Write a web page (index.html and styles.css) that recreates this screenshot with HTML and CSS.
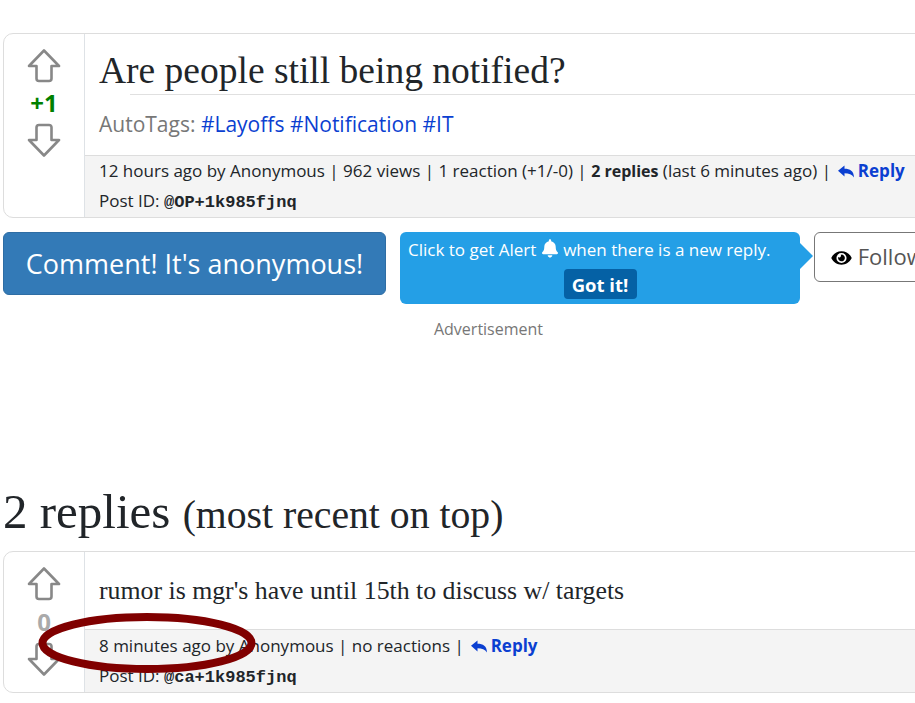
FILE: index.html
```html
<!DOCTYPE html>
<html lang="en">
<head>
    <meta charset="UTF-8">
    <meta name="viewport" content="width=device-width, initial-scale=1.0">
    <title>Are people still being notified?</title>
    <link rel="stylesheet" href="styles.css">
</head>
<body>
    <svg class="icon-defs" width="0" height="0">
        <symbol id="arrow-up" viewBox="0 0 34 34">
            <path d="M17 1.5L32 17H24.5V29.5Q24.5 32 22 32H12Q9.500 32 9.500 29.500V17H2Z" fill="none" stroke="#888" stroke-width="2.600" stroke-linejoin="round"/>
        </symbol>
        <symbol id="arrow-down" viewBox="0 0 34 34">
            <path d="M17 32.500L32 17H24.5V4.500Q24.500 2 22 2H12Q9.500 2 9.500 4.500V17H2Z" fill="none" stroke="#888" stroke-width="2.600" stroke-linejoin="round"/>
        </symbol>
        <symbol id="reply" viewBox="0 0 16 13">
            <path d="M0 5.800L6.500 0.500V3.800C12 3.800 15.800 6 16 12.500C14 9.400 11 8.300 6.500 8.300V11.500Z" fill="currentColor"/>
        </symbol>
    </svg>

    <div class="page">
        <section class="post">
            <div class="votes">
                <svg class="arrow"><use href="#arrow-up"/></svg>
                <div class="score score-up">+1</div>
                <svg class="arrow"><use href="#arrow-down"/></svg>
            </div>
            <div class="post-main">
                <h1 class="post-title">Are people still being notified?</h1>
                <p class="tags">AutoTags: <a href="#">#Layoffs</a> <a href="#">#Notification</a> <a href="#">#IT</a></p>
                <div class="meta">
                    <div class="meta-line">12 hours ago by Anonymous | 962 views | 1 reaction (+1/-0) | <b>2 replies</b> (last 6 minutes ago) | <a class="reply-link" href="#"><svg class="reply-icon"><use href="#reply"/></svg> Reply</a></div>
                    <div class="meta-line">Post ID: <code>@OP+1k985fjnq</code></div>
                </div>
            </div>
        </section>

        <div class="actions">
            <a class="comment-btn" href="#">Comment! It's anonymous!</a>
            <div class="alert-tip">
                <p>Click to get Alert
                    <svg class="bell" viewBox="0 0 448 512"><path d="M224 512c35.32 0 63.97-28.65 63.97-64H160.03c0 35.35 28.65 64 63.97 64zm215.39-149.71c-19.32-20.76-55.47-51.99-55.47-154.29 0-77.7-54.48-139.9-127.94-155.16V32c0-17.67-14.32-32-31.98-32s-31.98 14.33-31.98 32v20.84C118.56 68.1 64.08 130.3 64.08 208c0 102.3-36.15 133.53-55.47 154.29-6 6.45-8.66 14.16-8.61 21.71.11 16.4 12.98 32 32.1 32h383.8c19.12 0 32-15.6 32.1-32 .05-7.55-2.61-15.27-8.61-21.71z" fill="currentColor"/></svg>
                    when there is a new reply.</p>
                <button class="got-it">Got it!</button>
            </div>
            <a class="follow-btn" href="#">
                <svg class="eye" viewBox="0 0 576 512"><path d="M572.52 241.4C518.29 135.59 410.93 64 288 64S57.68 135.64 3.48 241.41a32.35 32.35 0 0 0 0 29.19C57.71 376.41 165.07 448 288 448s230.32-71.64 284.52-177.41a32.35 32.35 0 0 0 0-29.19zM288 400a144 144 0 1 1 144-144 143.93 143.93 0 0 1-144 144zm0-240a95.31 95.31 0 0 0-25.31 3.79 47.85 47.85 0 0 1-66.9 66.9A95.78 95.78 0 1 0 288 160z" fill="currentColor"/></svg>
                Follow
            </a>
        </div>

        <div class="ad">Advertisement</div>

        <h2 class="replies-title">2 replies <small>(most recent on top)</small></h2>

        <section class="post reply-post">
            <div class="votes">
                <svg class="arrow"><use href="#arrow-up"/></svg>
                <div class="score score-zero">0</div>
                <svg class="arrow"><use href="#arrow-down"/></svg>
            </div>
            <div class="post-main">
                <p class="reply-text">rumor is mgr's have until 15th to discuss w/ targets</p>
                <div class="meta">
                    <div class="meta-line">8 minutes ago by Anonymous | no reactions | <a class="reply-link" href="#"><svg class="reply-icon"><use href="#reply"/></svg> Reply</a></div>
                    <div class="meta-line">Post ID: <code>@ca+1k985fjnq</code></div>
                </div>
            </div>
            <!-- hand drawn circle on top of the screenshot -->
            <svg class="scribble" width="221" height="64" viewBox="0 0 221 64">
                <ellipse cx="110" cy="32" rx="104.500" ry="26" fill="none" stroke="#800000" stroke-width="8"/>
            </svg>
        </section>
    </div>
</body>
</html>
```

FILE: styles.css
```css
* {
    margin: 0;
    padding: 0;
    box-sizing: border-box;
}

html, body {
    overflow: hidden;
}

body {
    background: #fff;
    color: #212529;
    font-family: 'Open Sans', sans-serif;
    font-size: 16px;
}

a {
    text-decoration: none;
}

.icon-defs {
    position: absolute;
}

.page {
    width: 974px;
    padding: 33px 0 0 3px;
}

.post {
    display: flex;
    position: relative;
    height: 185px;
    border: 1px solid #ddd;
    border-radius: 10px;
}

.votes {
    flex: 0 0 81px;
    display: flex;
    flex-direction: column;
    align-items: center;
    padding-top: 15px;
    border-right: 1px solid #dee2e6;
}

.arrow {
    display: block;
    width: 34px;
    height: 34px;
}

.score {
    height: 40px;
    font-size: 24px;
    font-weight: 700;
    line-height: 39px;
}

.score-up {
    color: #008000;
}

.score-zero {
    color: #aaa;
}

.post-main {
    flex: 1;
    display: flex;
    flex-direction: column;
    min-width: 0;
}

.post-title {
    padding: 13px 0 0 14px;
    font-family: 'Liberation Serif', serif;
    font-size: 37.500px;
    font-weight: 400;
    line-height: 47px;
}

.post-title::after {
    content: "";
    display: block;
    height: 1px;
    margin-left: 31px;
    background: #e0e0e0;
}

.tags {
    padding: 14px 0 0 14px;
    color: #777;
    font-size: 21px;
    line-height: 30px;
}

.tags a,
.reply-link {
    color: #0b3fd1;
}

.meta {
    margin-top: auto;
    height: 62px;
    padding-left: 14px;
    background: #f4f4f4;
    border-top: 1px solid #ddd;
    border-radius: 0 0 10px 0;
}

.meta-line {
    height: 30px;
    line-height: 30px;
    white-space: nowrap;
    font-size: 17px;
}

.meta-line b {
    font-size: 16px;
}

.meta code {
    font-family: 'Liberation Mono', monospace;
    font-weight: 700;
}

.reply-link {
    font-weight: 700;
}

.reply-icon {
    width: 16px;
    height: 13px;
    margin: 0 -1px 0 3px;
    vertical-align: -1px;
}

.actions {
    display: flex;
    align-items: flex-start;
    gap: 14px;
    margin-top: 14px;
}

.comment-btn {
    flex: 0 0 383px;
    height: 63px;
    background: #337ab7;
    border: 1px solid #2e6da4;
    border-radius: 6px;
    color: #fff;
    font-size: 27px;
    line-height: 61px;
    text-align: center;
}

.alert-tip {
    position: relative;
    flex: 0 0 400px;
    height: 72px;
    padding: 6px 8px;
    background: #249fe6;
    border-radius: 6px;
    color: #fff;
    font-size: 17px;
    text-align: center;
}

.alert-tip::after {
    content: "";
    position: absolute;
    top: 11px;
    left: 100%;
    border-top: 13px solid transparent;
    border-bottom: 13px solid transparent;
    border-left: 13px solid #249fe6;
}

.alert-tip p {
    line-height: 24px;
    white-space: nowrap;
    text-align: left;
}

.bell {
    width: 16px;
    height: 19px;
    margin: 0 1px;
    vertical-align: -2px;
}

.got-it {
    display: block;
    width: 73px;
    height: 30px;
    margin: 7px auto 0;
    background: #0561a5;
    border: 0;
    border-radius: 4px;
    color: #fff;
    font-family: 'Open Sans', sans-serif;
    font-size: 18.500px;
    font-weight: 700;
}

.follow-btn {
    flex: 0 0 auto;
    width: 140px;
    height: 50px;
    padding-left: 16px;
    background: #fff;
    border: 1px solid #777;
    border-radius: 6px;
    color: #555;
    font-size: 22px;
    line-height: 47px;
    white-space: nowrap;
}

.eye {
    width: 21px;
    height: 18px;
    color: #000;
    vertical-align: -2px;
}

.ad {
    height: 182px;
    padding-top: 14px;
    color: #777;
    font-size: 16px;
    text-align: center;
}

.replies-title {
    font-family: 'Liberation Serif', serif;
    font-size: 49px;
    font-weight: 400;
    line-height: 52px;
}

.replies-title small {
    font-size: 39.700px;
}

.reply-post {
    height: 142px;
    margin-top: 10px;
}

.reply-post .meta {
    height: 63px;
    padding-top: 1px;
}

.reply-text {
    padding: 25px 0 0 14px;
    font-family: 'Liberation Serif', serif;
    font-size: 25.800px;
    line-height: 28px;
}

.reply-post .score {
    height: 41px;
    line-height: 41px;
}

.scribble {
    position: absolute;
    top: 59px;
    left: 33px;
}
```
